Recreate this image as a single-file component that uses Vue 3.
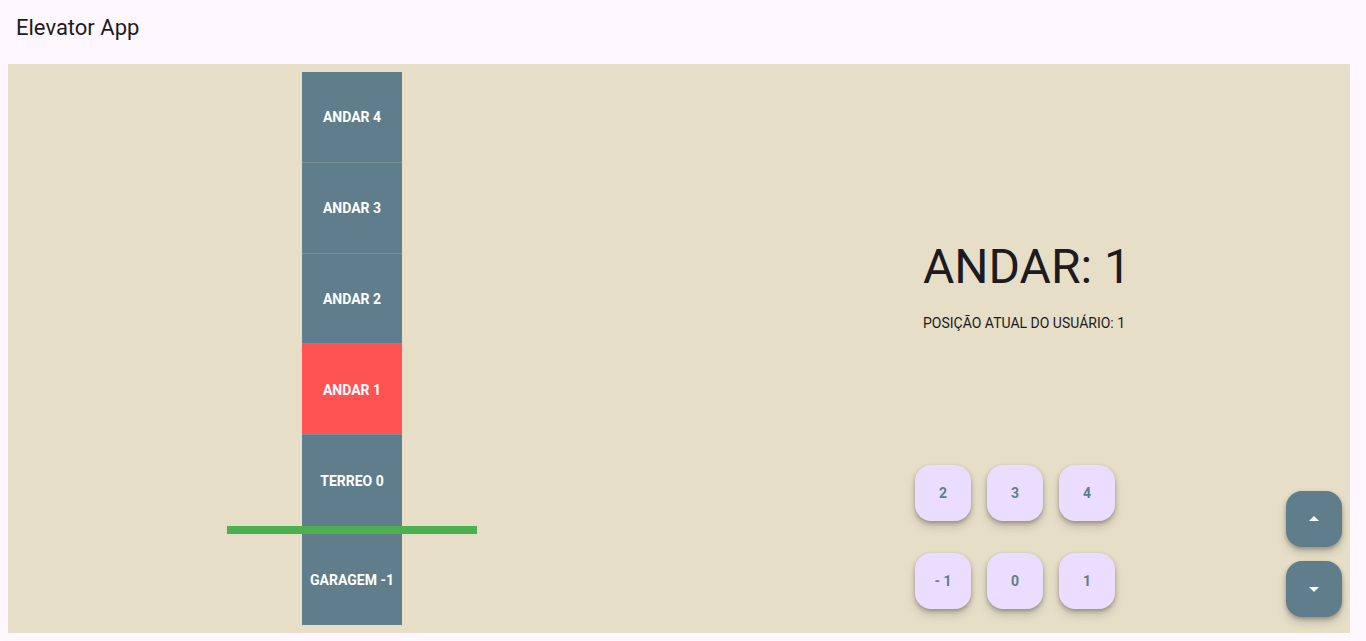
<script setup>
import { ref, computed } from 'vue'

const floors = [
  { level: 4, label: 'ANDAR 4' },
  { level: 3, label: 'ANDAR 3' },
  { level: 2, label: 'ANDAR 2' },
  { level: 1, label: 'ANDAR 1' },
  { level: 0, label: 'TERREO 0' },
]
const rows = [[2, 3, 4], [-1, 0, 1]]
const current = ref(1)
const position = computed(() => current.value)

function move(step) {
  current.value = Math.min(4, Math.max(-1, current.value + step))
}
</script>

<template>
  <div class="app">
    <header class="bar"><h1>Elevator App</h1></header>
    <main class="panel">
      <section class="shaft">
        <div
          v-for="floor in floors"
          :key="floor.level"
          class="floor"
          :class="{ active: current === floor.level, seam: floor.level > 0 }"
        >{{ floor.label }}</div>
        <div class="ground"></div>
        <div class="floor" :class="{ active: current === -1 }">GARAGEM -1</div>
      </section>
      <section class="controls">
        <div class="status">
          <h2>ANDAR: {{ current }}</h2>
          <p>POSIÇÃO ATUAL DO USUÁRIO: {{ position }}</p>
        </div>
        <div class="keypad">
          <div v-for="(row, i) in rows" :key="i" class="row">
            <button v-for="n in row" :key="n" type="button" class="key" @click="current = n">{{ n < 0 ? '- ' + -n : n }}</button>
          </div>
        </div>
      </section>
      <nav class="arrows">
        <button type="button" class="arrow" aria-label="Subir" @click="move(1)">
          <svg viewBox="0 0 24 24" width="24" height="24"><path d="M7 14l5-5 5 5z" /></svg>
        </button>
        <button type="button" class="arrow" aria-label="Descer" @click="move(-1)">
          <svg viewBox="0 0 24 24" width="24" height="24"><path d="M7 10l5 5 5-5z" /></svg>
        </button>
      </nav>
    </main>
  </div>
</template>

<style>
body {
  background: #fef7ff;
}
</style>

<style scoped>
.app {
  box-sizing: border-box;
  min-height: 100vh;
  display: flex;
  flex-direction: column;
  padding: 0 16px 8px 8px;
  background: #fef7ff;
  color: #1d1b20;
  font-family: Roboto, "Liberation Sans", sans-serif;
}
.bar {
  height: 56px;
  margin-bottom: 8px;
  padding-left: 8px;
  display: flex;
  align-items: center;
}
h1 {
  margin: 0;
  font-size: 22px;
  line-height: 28px;
  font-weight: 400;
}
.panel {
  position: relative;
  flex: 1;
  display: grid;
  grid-template-columns: 688fr 654fr;
  background: #e6dec7;
}
.shaft {
  padding: 8px 0;
  display: flex;
  flex-direction: column;
  align-items: center;
}
.floor {
  flex: 1;
  width: 100px;
  min-height: 48px;
  display: flex;
  align-items: center;
  justify-content: center;
  background: #607d8b;
  color: #fff;
  font-size: 14px;
  line-height: 20px;
  font-weight: 700;
}
.seam {
  box-shadow: inset 0 -1px #788d94;
}
.active {
  background: #ff5252;
}
.ground {
  width: 250px;
  height: 8px;
  background: #4caf50;
}
.controls {
  display: flex;
  flex-direction: column;
  align-items: center;
}
.status {
  flex: 1;
  display: flex;
  flex-direction: column;
  justify-content: flex-end;
  padding: 0 0 132px 8px;
}
h2 {
  margin: 0 0 10px;
  font-size: 48px;
  line-height: 72px;
  font-weight: 400;
}
p {
  margin: 0;
  font-size: 14px;
  line-height: 20px;
}
.keypad {
  display: flex;
  flex-direction: column;
  gap: 32px;
  padding: 0 16px 24px 0;
}
.row {
  display: flex;
  gap: 16px;
}
.key,
.arrow {
  width: 56px;
  height: 56px;
  padding: 0;
  border: 0;
  border-radius: 16px;
  display: flex;
  align-items: center;
  justify-content: center;
  box-shadow: 0 3px 5px -1px rgba(0, 0, 0, 0.2), 0 6px 10px rgba(0, 0, 0, 0.14), 0 1px 4px rgba(0, 0, 0, 0.12);
  cursor: pointer;
}
.key {
  background: #eaddff;
  color: #607d8b;
  font-family: inherit;
  font-size: 14px;
  line-height: 20px;
  font-weight: 700;
}
.arrow {
  background: #607d8b;
}
.arrow svg {
  fill: #fff;
}
.arrows {
  position: absolute;
  right: 8px;
  bottom: 16px;
  display: flex;
  flex-direction: column;
  gap: 14px;
}
</style>
